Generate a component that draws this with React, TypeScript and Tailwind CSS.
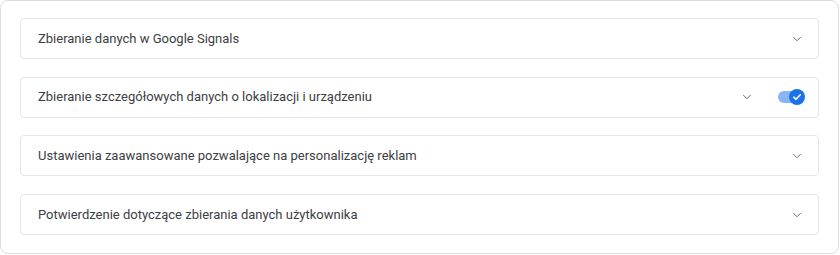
import { ChevronDown } from 'lucide-react';

const rows = [
  { title: 'Zbieranie danych w Google Signals', toggle: false },
  { title: 'Zbieranie szczegółowych danych o lokalizacji i urządzeniu', toggle: true },
  { title: 'Ustawienia zaawansowane pozwalające na personalizację reklam', toggle: false },
  { title: 'Potwierdzenie dotyczące zbierania danych użytkownika', toggle: false },
];

function Toggle() {
  return (
    <div className="relative ml-[24px] mr-[10px] h-[12px] w-[16px] rounded-l-full bg-[#8ab4f8]">
      <div className="absolute -right-[11px] top-1/2 flex h-[16px] w-[16px] -translate-y-1/2 items-center justify-center rounded-full bg-[#1a73e8]">
        <svg width="10" height="10" viewBox="0 0 10 10" fill="none">
          <path d="M1.8 5.2 L4 7.3 L8.3 2.8" stroke="white" strokeWidth="1.6" strokeLinecap="round" strokeLinejoin="round" />
        </svg>
      </div>
    </div>
  );
}

function Row({ title, toggle }: { title: string; toggle: boolean }) {
  return (
    <div className="flex h-[41px] items-center rounded-[4px] border border-[#e3e5e8] bg-white pl-[17px] pr-[14px]">
      <div className="flex-1 text-[13px] text-[#3c4043]">{title}</div>
      <ChevronDown size={14} strokeWidth={1.6} className="text-[#5f6368]" />
      {toggle && <Toggle />}
    </div>
  );
}

export default function App() {
  return (
    <div className="w-[840px] bg-white" style={{ fontFamily: 'Roboto, "Noto Sans", sans-serif' }}>
      <div className="flex h-[254px] w-[839px] flex-col gap-[17.7px] rounded-[8px] border border-[#dadce0] px-[19px] py-[17px]">
        {rows.map((r) => (
          <Row key={r.title} title={r.title} toggle={r.toggle} />
        ))}
      </div>
    </div>
  );
}
